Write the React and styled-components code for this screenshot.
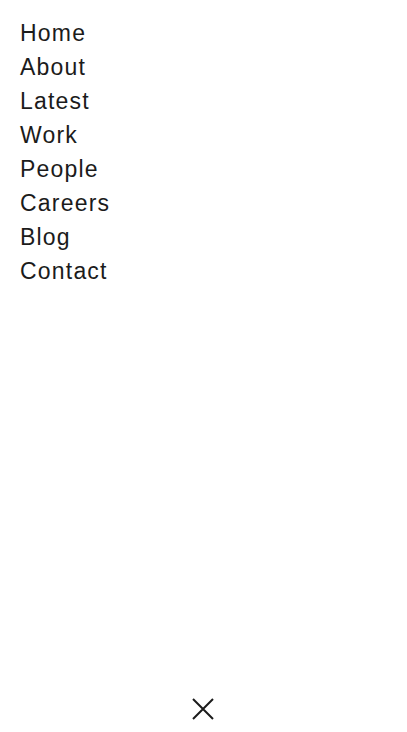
import React from 'react'
import styled, { createGlobalStyle } from 'styled-components'

const GlobalStyle = createGlobalStyle`
    html, body {
        margin: 0;
        padding: 0;
        background: #ffffff;
    }
    body {
        font-family: "Liberation Sans", Arial, sans-serif;
        color: #1b1b1b;
    }
`

const items = ['Home', 'About', 'Latest', 'Work', 'People', 'Careers', 'Blog', 'Contact']

function App() {
    return (
        <Page>
            <GlobalStyle />
            <Menu>
                {items.map(item => (
                    <MenuLink key={item} href="#">{item}</MenuLink>
                ))}
            </Menu>
            <Footer>
                <CloseButton aria-label="Close menu">
                    <svg width="22" height="22" viewBox="0 0 22 22">
                        <path d="M1 1 L21 21 M21 1 L1 21" stroke="#1b1b1b" strokeWidth="2" fill="none" />
                    </svg>
                </CloseButton>
            </Footer>
        </Page>
    )
}

const Page = styled.div`
    height: 732px;
    display: flex;
    flex-direction: column;
    justify-content: space-between;
    box-sizing: border-box;
`

const Menu = styled.nav`
    display: flex;
    flex-direction: column;
    align-items: flex-start;
    padding: 16px 20px 0;
`

const MenuLink = styled.a`
    font-size: 23px;
    line-height: 34px;
    letter-spacing: 1.2px;
    color: #1b1b1b;
    text-decoration: none;
`

const Footer = styled.div`
    display: flex;
    justify-content: center;
    padding: 0 2px 12px 0;
`

const CloseButton = styled.button`
    display: flex;
    align-items: center;
    justify-content: center;
    width: 22px;
    height: 22px;
    padding: 0;
    border: none;
    background: none;
    cursor: pointer;
`

export default App
